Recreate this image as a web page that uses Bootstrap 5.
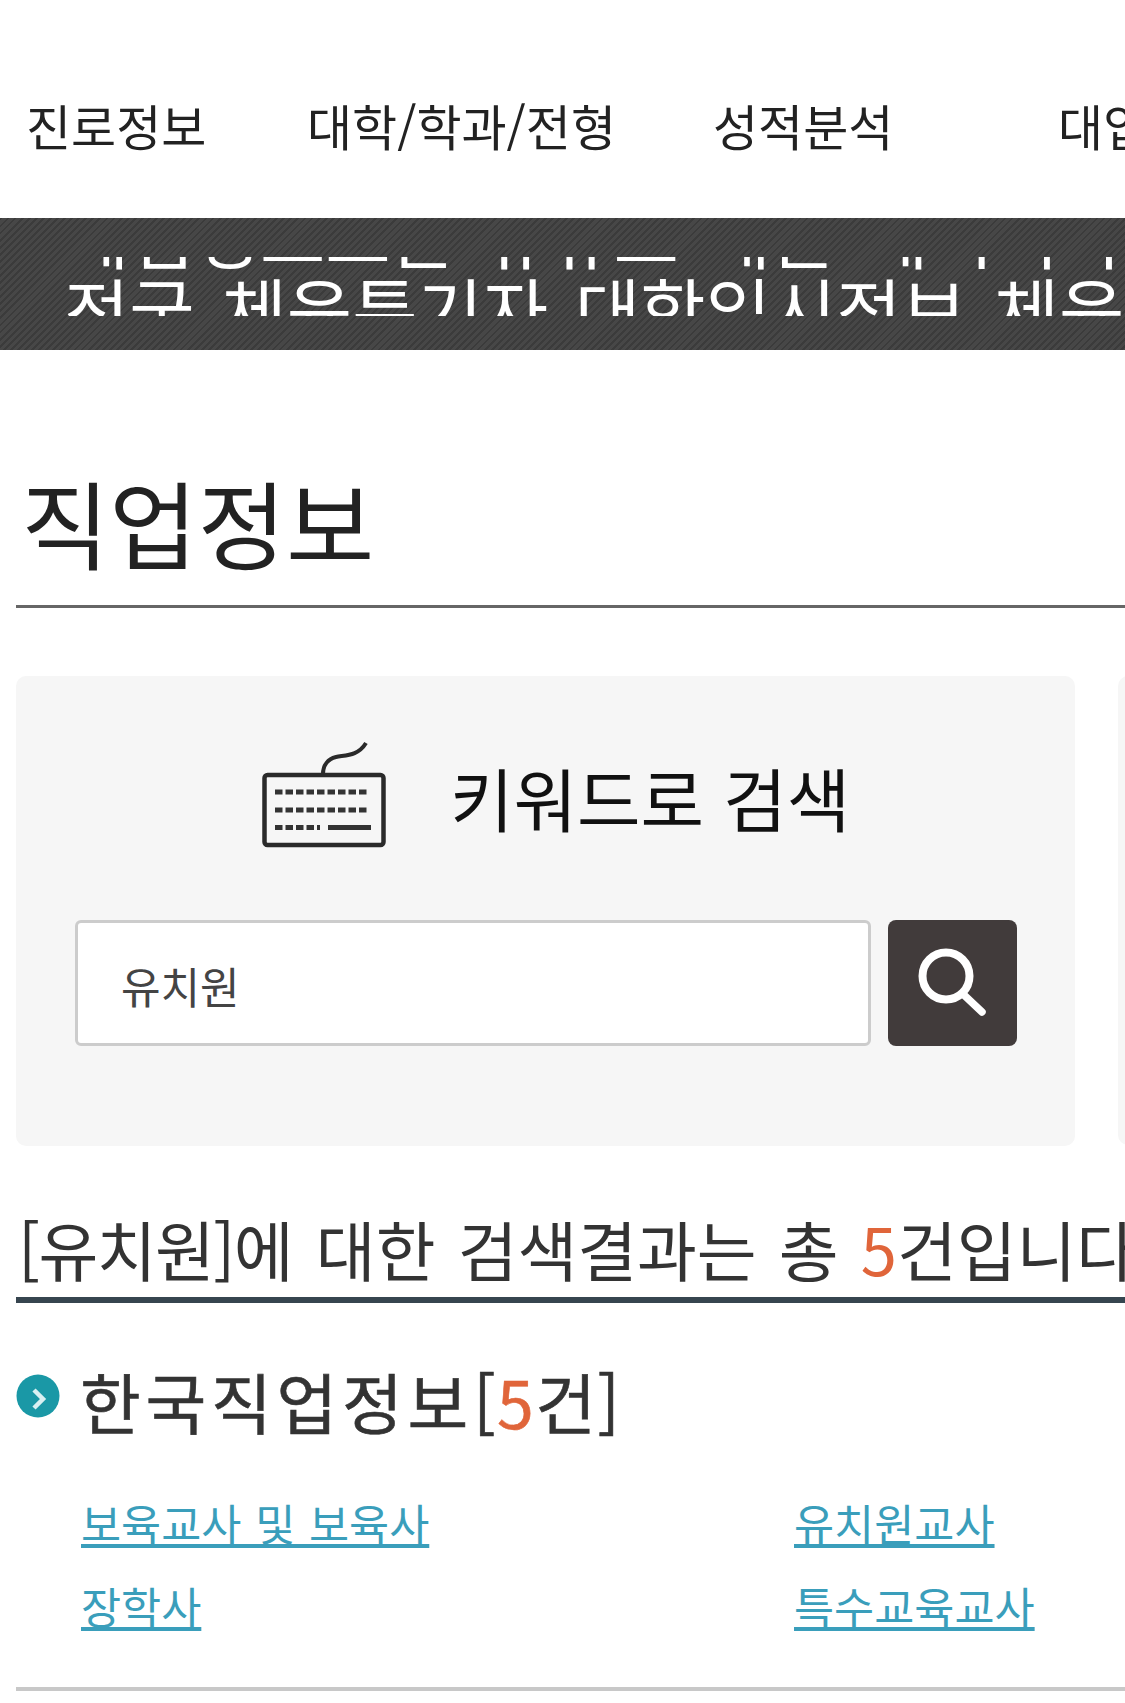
<!DOCTYPE html>
<html lang="ko"><head><meta charset="utf-8">
<link href="https://cdn.jsdelivr.net/npm/bootstrap@5.3.0/dist/css/bootstrap.min.css" rel="stylesheet">
<style>
html,body{margin:0;height:1703px;overflow:hidden;background:#fff}
body{font-family:"Noto Sans CJK KR","Noto Sans",sans-serif;color:#222;width:1125px}
.top-nav{height:218px;padding:32px 0 0 26px;white-space:nowrap;align-items:center;font-size:49px;color:#222;flex-wrap:nowrap}
.top-nav span{flex:none}
.n1{width:281px}.n2{width:406px}.n3{width:345px}
.stripe{height:132px;background-color:#444;background-image:repeating-linear-gradient(135deg,#3b3b3b 0 2px,#474747 2px 5px);padding-top:39px;overflow:hidden}
.clip{height:59px;overflow:hidden;color:#fff;font-size:71px;white-space:nowrap;padding-left:64px;line-height:75px;word-spacing:7px}
.clip-first{margin-top:-62px}
.page-title{margin:0 0 0 16px;padding:113px 0 0 5px;height:258px;width:1200px;font-size:96px;font-weight:400;border-bottom:3px solid #666;line-height:1.2;color:#222}
.search-box{margin:68px 0 0 16px;width:1059px;height:470px;background:#f6f6f6;border-radius:10px;padding-top:64px}
.side-box{position:absolute;left:1118px;top:676px;width:200px;height:469px;background:#f6f6f6;border-radius:10px}
.kw-title{font-size:69px;line-height:1;color:#111;padding-left:246px;gap:64px;height:180px;align-items:flex-start}
.kw-title span{padding-top:23px;white-space:nowrap}
.kw-form{padding-left:59px;gap:17px}
.kw-input{width:796px;height:126px;border:3px solid #ccc;border-radius:6px;background:#fff;font-size:43px;color:#444;padding-left:43px;line-height:124px}
.kw-btn{width:129px;height:126px;background:#413b3b;border-radius:8px;align-items:center;justify-content:center}
.result-line{margin:57px 0 0 16px;width:1200px;height:100px;padding:0 0 0 2px;border-bottom:6px solid #36454f;font-size:65px;line-height:90px;white-space:nowrap;color:#333;word-spacing:4px}
.tight{letter-spacing:-1.5px}
.accent{color:#e0653a}
.sec-title{margin:52px 0 0 16px;font-size:66px;line-height:90px;color:#333;letter-spacing:1.6px;gap:20px;align-items:center;font-weight:400;white-space:nowrap;-webkit-text-stroke:.6px currentColor}
.sec-title svg{margin-top:-8px}
.spaced{letter-spacing:4.8px}
.links{margin:36px 0 0 81px;font-size:43.6px;line-height:83px;width:1044px;grid-template-columns:713px 1fr;word-spacing:1.5px}
.links a{color:#3a9ebb}
.end-rule{margin:40px 0 0 16px;height:4px;background:#c8c8c8;width:1109px}
</style></head><body>
<nav class="d-flex top-nav"><span class="n1">진로정보</span><span class="n2">대학/학과/전형</span><span class="n3">성적분석</span><span>대입정보</span></nav>
<div class="stripe"><div class="clip"><div class="clip-first">제험영모로든 규뉴로 해든 제시니자</div><div>전국 체육특기자 대학입시정보 체육특기자</div></div></div>
<h1 class="page-title">직업정보</h1>
<div class="side-box"></div>
<section class="search-box">
<div class="d-flex kw-title">
<svg width="124" height="108" viewBox="0 0 124 108" fill="none" stroke="#2a2a2a"><rect x="2.5" y="35" width="119" height="70" rx="3" stroke-width="4.5"/><path d="M61 34c0-9 5-15 13-17 10-2 22-1 30-14" stroke-width="4"/><path d="M13 52H106M13 70H106M13 87.500H58" stroke-width="5" stroke-dasharray="7.500 3" stroke="#333"/><path d="M66 87.500H109" stroke-width="5" stroke="#333"/></svg>
<span>키워드로 검색</span></div>
<div class="d-flex kw-form"><div class="kw-input">유치원</div><div class="d-flex kw-btn"><svg width="70" height="70" viewBox="0 0 70 70" fill="none" stroke="#fff"><circle cx="28" cy="28" r="23.500" stroke-width="8"/><path d="M46 47 64 64" stroke-width="7.500" stroke-linecap="round"/></svg></div></div>
</section>
<h2 class="result-line fw-normal"><span class="tight">[유치원]</span>에 대한 검색결과는 총 <span class="accent">5</span>건입니다</h2>
<h3 class="d-flex sec-title"><svg width="44" height="44" viewBox="0 0 44 44"><circle cx="22" cy="22" r="21.500" fill="#1a98a6"/><path d="M18 16 27 25 18 34" fill="none" stroke="#d8f0f2" stroke-width="4.500"/></svg><span><span class="spaced">한국직업정보</span>[<span class="accent">5</span>건]</span></h3>
<div class="d-grid links"><div><a href="#">보육교사 및 보육사</a></div><div><a href="#">유치원교사</a></div><div><a href="#">장학사</a></div><div><a href="#">특수교육교사</a></div></div>
<div class="end-rule"></div>
</body></html>
